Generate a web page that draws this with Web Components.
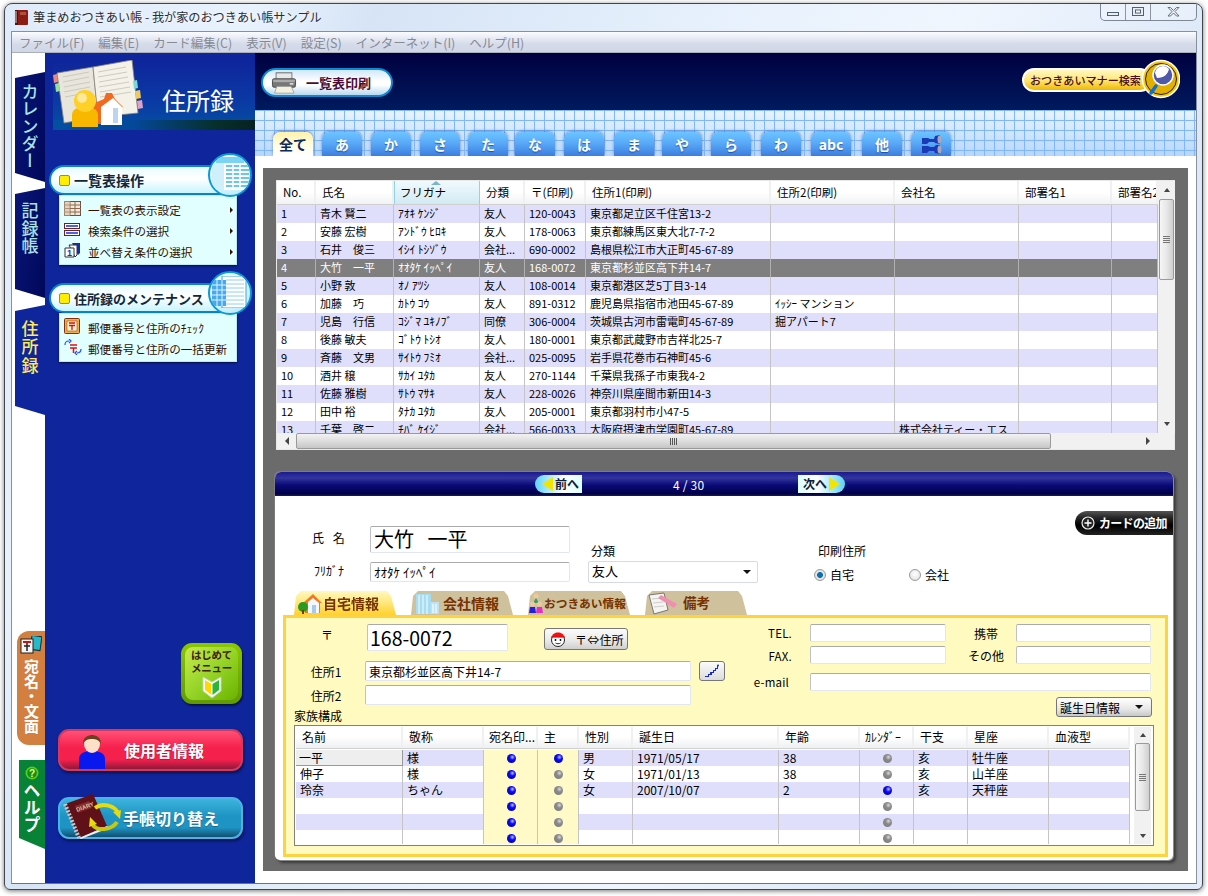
<!DOCTYPE html>
<html lang="ja">
<head>
<meta charset="utf-8">
<title>筆まめおつきあい帳</title>
<style>
html,body{margin:0;padding:0;background:#fff;width:1208px;height:896px;overflow:hidden}
body{font-family:"Noto Sans CJK JP","Noto Sans",sans-serif;font-size:11px;color:#000}
</style>
</head>
<body>
<app-window caption="筆まめおつきあい帳 - 我が家のおつきあい帳サンプル">
  <side-tabs></side-tabs>
  <side-bar></side-bar>
  <main-area></main-area>
</app-window>
<script>
const def=(name,css,html)=>customElements.define(name,class extends HTMLElement{
  connectedCallback(){
    if(this.shadowRoot)return;
    const r=this.attachShadow({mode:'open'});
    r.innerHTML=`<style>:host{box-sizing:border-box}*{box-sizing:border-box}${css}</style>`+(typeof html==='function'?html(this):html);
  }
});
const BASE='"Noto Sans CJK JP","Noto Sans",sans-serif';

/* ---------- small icons ---------- */
const ICON={
 sheet:`<svg width="17" height="15" viewBox="0 0 17 15"><rect x=".5" y=".5" width="16" height="14" fill="#f2e8d8" stroke="#6a5040"/><path d="M6 0v15M11 0v15M0 4h17M0 7.500h17M0 11h17" stroke="#8a6a50"/><rect x="0" y="0" width="6" height="15" fill="#d8b8a0" opacity=".5"/></svg>`,
 search:`<svg width="16" height="13" viewBox="0 0 16 13"><rect x=".5" y=".5" width="15" height="5" fill="#fff" stroke="#702020"/><rect x=".5" y="7.500" width="15" height="5" fill="#fff" stroke="#702020"/><path d="M2 3h12M2 10h12" stroke="#1030e0" stroke-width="1.400"/></svg>`,
 sort:`<svg width="17" height="16" viewBox="0 0 17 16"><path d="M8 1h8v10l-2 2z" fill="#1030b0"/><path d="M5 3h8v10l-2 2z" fill="#fff" stroke="#333"/><path d="M1 6h9v9H1z" fill="#fff" stroke="#333"/><text x="3" y="14" font-size="9" font-weight="700" fill="#1030e0" font-family="Liberation Sans">1</text></svg>`,
 post:`<svg width="16" height="16" viewBox="0 0 16 16"><rect x=".5" y=".5" width="15" height="15" rx="1" fill="#f0b050" stroke="#803010"/><rect x="3" y="3" width="10" height="10" fill="#fff3d0" stroke="#a04010" stroke-width=".6"/><path d="M5 5h6M5 7.500h6M8 7.500V12" stroke="#d01010" stroke-width="1.300"/></svg>`,
 postsync:`<svg width="18" height="16" viewBox="0 0 18 16"><path d="M6 6h7M6 9h7M9.500 9v5" stroke="#e01010" stroke-width="1.500"/><path d="M1 6C1 3 2 2 5 2M5 0l2 2-2 2" fill="none" stroke="#2050f0" stroke-width="1.200"/><path d="M17 10c0 3-1 4-4 4M13 16l-2-2 2-2" fill="none" stroke="#2050f0" stroke-width="1.200"/></svg>`,
 table1:`<svg width="37" height="33" viewBox="0 0 37 33"><path d="M4 0h28v6H4z" fill="#7cd4f4"/><path d="M0 6h12v27H0z" fill="#cfeffb"/><rect x="12" y="6" width="25" height="27" fill="#fff"/><path d="M14 9h23M14 13h23M14 17h23M14 21h23M14 25h23M14 29h23" stroke="#39b4ec" stroke-width="1.600"/><path d="M21 7v26M28 7v26" stroke="#fff" stroke-width="1.500"/></svg>`,
 table2:`<svg width="36" height="32" viewBox="0 0 36 32"><rect x="10" y="0" width="24" height="32" fill="#fff" stroke="#39a4e4"/><path d="M14 4h18M14 8h18M14 12h18M14 16h18M14 20h18M14 24h18M14 28h18" stroke="#90d0f0"/><rect x="0" y="4" width="14" height="26" fill="#48a8ec"/><path d="M0 9h14M0 14h14M0 19h14M0 24h14M5 4v26M10 4v26" stroke="#dff4ff"/></svg>`
};

/* ---------- window ---------- */
def('window-controls',`
:host{display:flex;width:97px;height:17px;border:1px solid #7c8894;border-top:0;border-radius:0 0 5px 5px;background:rgba(255,255,255,.25);align-self:flex-start;flex:none}
div{display:flex;align-items:center;justify-content:center;border-right:1px solid #8a96a4;width:25px}
div:first-child{width:26px}
div:last-child{border:0;flex:1}
`,`<div><svg width="12" height="10"><rect x=".5" y="5.500" width="11" height="3" fill="#e8eef6" stroke="#506070"/></svg></div>
<div><svg width="12" height="10"><rect x=".5" y=".5" width="11" height="8" fill="#e8eef6" stroke="#506070"/><rect x="3.500" y="3" width="5" height="3" fill="#fff" stroke="#506070"/></svg></div>
<div><svg width="13" height="10"><path d="M1 .5h2.500l3 3 3-3H12L8 4.500 12 9H9.500l-3-3-3 3H1l4-4.500z" fill="#eef2f8" stroke="#64707c"/></svg></div>`);

def('app-window',`
:host{display:block;margin:3px 0 0 4px;width:1199px;height:887px;border:1px solid #40464c;border-radius:8px 8px 6px 6px;padding:0 5px 6px 6px;
 background:linear-gradient(112deg,#dfeafa 0%,#e8f2fd 16%,#d6e4f6 24%,#e6f0fc 45%,#f0f6fe 62%,#dce8f8 80%,#e4eefb 100%);
 box-shadow:0 1px 5px rgba(0,0,0,.55);font-family:${BASE};overflow:hidden}
.title{height:27px;display:flex;align-items:center;padding-left:2px;color:#2a2e34;font-size:12.150px}
.title span{margin-left:4px;margin-bottom:2px;text-shadow:0 0 4px #fff;white-space:nowrap}
.title svg{margin-bottom:2px;flex:none}
.title window-controls{margin-left:auto}
.client{height:853px;border:1px solid #8a9098;border-bottom-color:#707478;background:#fff;display:flex;flex-direction:column}
.menu{height:21px;flex:none;display:flex;align-items:center;padding-left:7px;gap:14px;color:#858b95;font-size:12.500px;white-space:nowrap;
 background:linear-gradient(#fbfcfe 0,#e8ebf5 30%,#d6dbea 60%,#d2d7e7 100%);border-bottom:1px solid #a9b0bc}
.body{flex:1;display:flex;min-height:0}
`,h=>`<div class="title"><svg width="16" height="16" viewBox="0 0 16 16"><rect x="2" y="1" width="13" height="15" rx="1" fill="#8c1c14"/><rect x="2" y="1" width="3" height="15" fill="#501010"/><path d="M1 3h3M1 5h3M1 7h3M1 9h3M1 11h3M1 13h3" stroke="#ddd"/><rect x="7" y="3" width="6" height="3" fill="#b05040"/></svg><span>${h.getAttribute('caption')}</span><window-controls></window-controls></div>
<div class="client"><div class="menu"><span>ファイル(F)</span><span>編集(E)</span><span>カード編集(C)</span><span>表示(V)</span><span>設定(S)</span><span>インターネット(I)</span><span>ヘルプ(H)</span></div>
<div class="body"><slot></slot></div></div>`);

/* ---------- left tabs ---------- */
def('side-tab',`
:host{display:flex;flex:none;justify-content:center;width:30px;height:110px;padding-top:11px;font-size:17px;font-weight:500;color:#a9e3e6;
 background:linear-gradient(100deg,#0a1678,#00085a);clip-path:polygon(0 6px,100% 0,100% 100%,0 calc(100% - 9px))}
:host([active]){background:#0f259b;color:#ffe95c}
span{writing-mode:vertical-rl;letter-spacing:var(--ls,.3px);line-height:1}
`,`<span><slot></slot></span>`);
def('side-tabs',`
:host{display:flex;flex-direction:column;align-items:flex-end;width:33px;flex:none;padding-top:19px;background:#fff}
.t2{margin-top:6px;padding-top:14px;--ls:.7px}.t3{margin-top:7px;padding-top:15px;--ls:1.300px}
.o{margin-top:216px;width:28px;height:114px;background:#d27f3f;border-radius:12px 0 0 12px;color:#fff;font-weight:700;font-size:15px;display:flex;flex-direction:column;align-items:center;padding-top:5px}
.o span,.g span{writing-mode:vertical-rl;line-height:1}
.o span{margin-top:5px;letter-spacing:0;margin-left:1px}
.g{margin-top:15px;width:26px;height:89px;background:#078237;clip-path:polygon(0 0,100% 0,100% 100%,0 78px);color:#fff;font-weight:700;font-size:17px;display:flex;flex-direction:column;align-items:center;padding-top:6px}
.g span{margin-top:2px}
`,`<side-tab>カレンダー</side-tab><side-tab class="t2">記録帳</side-tab><side-tab class="t3" active>住所録</side-tab>
<div class="o"><svg width="22" height="18" viewBox="0 0 22 18"><rect x="11" y="0" width="10" height="14" fill="#28b8c8" stroke="#083040" transform="rotate(8 16 7)"/><rect x="1" y="3" width="12" height="14" fill="#f4f4f4" stroke="#222"/><path d="M3 6h8" stroke="#d01010" stroke-width="2"/><path d="M7 7v8M4 10h6" stroke="#222" stroke-width="1.500"/></svg><span>宛名・文面</span></div>
<div class="g"><svg width="14" height="14" viewBox="0 0 14 14"><circle cx="7" cy="7" r="6.500" fill="#54d018"/><circle cx="7" cy="7" r="4.800" fill="#148c20"/><text x="7" y="10.500" text-anchor="middle" font-size="10" font-weight="700" fill="#e8ff70" font-family="Liberation Sans">?</text></svg><span>ヘルプ</span></div>`);

/* ---------- sidebar ---------- */
def('menu-item',`
:host{display:flex;align-items:center;height:21px;font-size:11.600px;color:#301000;padding-left:4px}
.i{width:24px;display:flex;flex:none}
.a{margin-left:auto;margin-right:3px;width:0;height:0;border-left:3px solid #301000;border-top:3px solid transparent;border-bottom:3px solid transparent}
:host([plain]) .a{display:none}
span{white-space:nowrap}
`,h=>`<div class="i"><slot name="i"></slot></div><span><slot></slot></span><div class="a"></div>`);
def('menu-section',`
:host{display:block;position:relative;margin-left:4px}
.pill{height:30px;width:172px;border:2px solid #0a86c8;border-right:0;border-radius:15px 0 0 15px;background:linear-gradient(#e6fbff 0,#fff 45%,#c8f4fc 100%);
 display:flex;align-items:center;padding-left:8px;font-weight:700;color:#10283c;white-space:nowrap}
.sq{width:11px;height:11px;background:#ffee00;border:1px solid #888;border-radius:2px;margin-right:4px;flex:none}
.c{position:absolute;left:159px;top:var(--ct,-12px);width:44px;height:44px;border-radius:50%;border:2px solid #0a9ad8;background:radial-gradient(circle at 40% 30%,#fff 0,#c8f0fc 70%,#8adcf8 100%);display:flex;align-items:center;justify-content:center;overflow:hidden}
.panel{margin-left:10px;width:178px;background:#e2ffff;padding:3px 0 2px;box-shadow:0 1px 2px rgba(0,0,0,.6);border:1px solid #c0e8f0}
`,h=>`<div class="pill" style="font-size:${h.getAttribute('fs')||14}px"><div class="sq"></div>${h.getAttribute('heading')}</div>
<div class="c"><slot name="badge"></slot></div><div class="panel"><slot></slot></div>`);
def('big-button',`
:host{display:flex;align-items:center;height:42px;width:185px;margin-left:13px;border-radius:11px;border:2px solid var(--b);background:linear-gradient(var(--t) 0,var(--m) 45%,var(--m) 75%,var(--d) 100%);color:#fff;font-size:16px;font-weight:700;box-shadow:1px 2px 3px rgba(0,0,0,.55);position:relative;text-shadow:0 1px 1px rgba(0,0,0,.3);white-space:nowrap}
.i{width:var(--w,64px);flex:none;display:flex;justify-content:center;align-self:flex-end}
`,`<div class="i"><slot name="i"></slot></div><slot></slot>`);
def('starter-button',`
:host{display:flex;flex-direction:column;align-items:center;width:61px;height:61px;margin-left:136px;border-radius:11px;background:linear-gradient(#8cc800,#609a00);padding:4px;box-shadow:1px 2px 2px rgba(0,0,0,.5)}
.f{flex:1;width:100%;border-radius:8px;background:linear-gradient(135deg,#c6ea50 0,#96d428 50%,#6ab400 100%);display:flex;flex-direction:column;align-items:center;padding-top:2px;color:#43200c;font-family:"Liberation Sans","Noto Sans CJK JP",sans-serif;font-weight:700;font-size:10.500px;line-height:13px;letter-spacing:-.2px;white-space:nowrap}
svg{margin-top:0}
`,`<div class="f"><span>はじめて</span><span>メニュー</span><svg width="20" height="24" viewBox="0 0 20 24"><path d="M1 2l9 5 9-5v14l-9 7-9-7z" fill="#fff" stroke="#bcd8a0"/><path d="M3 5l6.500 4v11L3 15z" fill="#ffd800"/><path d="M17 5l-6.500 4v11L17 15z" fill="#28b838"/></svg></div>`);
def('side-bar',`
:host{display:block;width:210px;flex:none;background:#0f259b;padding-top:7px;height:830px;overflow:hidden}
.h{margin-left:8px;height:70px;position:relative;background:linear-gradient(#0f259b 0,#0a3aa4 60%,#0450a0 100%);display:flex;overflow:hidden}
.h::after{content:"";position:absolute;left:0;right:0;bottom:0;height:10px;background:linear-gradient(90deg,#0450a0 0,#04489a 40%,#06302c 80%,#062220 100%)}
.h svg{position:absolute;left:0;top:0;z-index:1}
.h b{position:absolute;left:109px;top:25px;color:#fff;font-weight:400;font-size:24px;line-height:30px;z-index:1}
.s1{margin-top:35px}.s2{margin-top:18px}
.st{margin-top:281px}.b1{margin-top:25px;--b:#d03a60;--t:#ff5076;--m:#f6204c;--d:#901838}
.b2{margin-top:26px;--b:#48b4e8;--t:#3cb4dc;--m:#1e94c4;--d:#105070}
`,`<div class="h"><svg width="92" height="70" viewBox="0 0 92 70">
<path d="M4 13L40 7l5 50-34 6z" fill="#e8e5dc" stroke="#8a8478" stroke-width=".8"/><path d="M40 7L79 0l6 53-40 4z" fill="#f4f1e8" stroke="#8a8478" stroke-width=".8"/>
<path d="M10 17l26-5M10 22l26-5M11 27l26-5M11 32l26-5M12 37l26-5M45 12l28-5M45 17l29-5M46 22l29-5M46 27l30-5M47 32l30-5M47 37l31-5" stroke="#c4c0b6" stroke-width=".8"/>
<path d="M0 15l4-1 1 8-4 1z" fill="#e88880"/><path d="M2 24l4-1 1 8-4 1z" fill="#98e098"/><path d="M80 21l4-1 1 8-4 1z" fill="#78d8d8"/><path d="M82 31l5-1 1 8-5 1z" fill="#f0c860"/><path d="M84 41l5-1 1 8-5 1z" fill="#e0a0c8"/>
<path d="M39 44l12-5 2-6h6l3 6 8 8-3 1v16H44z" fill="#f06a20"/><path d="M48 47l12-9 9 9v18H48z" fill="#fff"/><path d="M60 48h5v15h-5z" fill="#bcd4f0"/>
<path d="M19 67V55c0-6 6-8 13-8s13 2 13 8v12z" fill="#f8b800"/><circle cx="32" cy="41" r="11" fill="#ffd028"/><circle cx="29" cy="38" r="5" fill="#ffe89a"/></svg><b>住所録</b></div>
<menu-section class="s1" heading="一覧表操作"><span slot="badge">${ICON.table1}</span>
 <menu-item><span slot="i">${ICON.sheet}</span>一覧表の表示設定</menu-item><menu-item><span slot="i">${ICON.search}</span>検索条件の選択</menu-item><menu-item><span slot="i">${ICON.sort}</span>並べ替え条件の選択</menu-item></menu-section>
<menu-section class="s2" heading="住所録のメンテナンス" fs="13"><span slot="badge">${ICON.table2}</span>
 <menu-item plain><span slot="i">${ICON.post}</span>郵便番号と住所のﾁｪｯｸ</menu-item><menu-item plain><span slot="i">${ICON.postsync}</span>郵便番号と住所の一括更新</menu-item></menu-section>
<starter-button class="st"></starter-button>
<big-button class="b1"><svg slot="i" width="26" height="34" viewBox="0 0 26 34"><path d="M0 34V24c0-6 6-8 13-8s13 2 13 8v10z" fill="#0a18f0"/><ellipse cx="13" cy="9" rx="8" ry="9" fill="#fce0c8"/><path d="M4 9C4 2 9 0 13 0s9 2 9 9c-2-4-5-5-9-5S6 5 4 9z" fill="#6a4020"/></svg>使用者情報</big-button>
<big-button class="b2" style="--w:63px"><svg slot="i" width="62" height="46" viewBox="0 0 62 46" style="margin-bottom:-3px;margin-left:-4px;overflow:visible"><path d="M6 10L34 0l14 32-28 12z" fill="#601018"/><path d="M6 10l14 34" stroke="#c8c8c8" stroke-width="4" stroke-dasharray="2 1.500"/><path d="M20 44l28-12 2 2-28 11z" fill="#eee"/><path d="M16 12l14-5 3 7-14 5z" fill="#8a2a30"/><text x="18" y="18" font-size="6" fill="#e0c090" font-family="Liberation Sans" transform="rotate(-20 18 18)">DIARY</text>
<path d="M36 14c8-6 20-2 23 5" fill="none" stroke="#e2dc10" stroke-width="4"/><path d="M61 25l-7-7 8-2z" fill="#e2dc10"/><path d="M58 28c-5 8-20 10-25 2" fill="none" stroke="#c8c810" stroke-width="4"/><path d="M31 23l7 7-8 3z" fill="#e2dc10"/></svg>手帳切り替え</big-button>`);

/* ---------- main header ---------- */
def('kana-tab',`
:host{display:flex;align-items:center;justify-content:center;width:40px;height:24px;border-radius:7px 7px 0 0;background:linear-gradient(#6cc4ff 0,#5aaaf8 45%,#3c7ee0 100%);color:#fff;font-weight:700;font-size:14px;box-shadow:0 -1px 3px rgba(30,60,120,.55);text-shadow:0 1px 1px rgba(0,40,120,.6);line-height:1;flex:none}
:host([active]){background:linear-gradient(#fff2a8 0,#fffce0 50%,#fff 100%);color:#0a2a60;text-shadow:none}
`,`<slot></slot>`);
const KANA=[['全て',0],['あ',9],['か',9],['さ',9],['た',8],['な',7],['は',9],['ま',10],['や',8],['ら',9],['わ',10],['abc',10],['他',11]];
def('top-header',`
:host{display:block;flex:none}
.nav{height:57px;background:linear-gradient(#000040 0,#001a5e 100%);display:flex;justify-content:space-between;position:relative}
.print{margin:15px 0 0 6px;width:132px;height:29px;border-radius:15px;border:2.500px solid #0a8ad0;background:linear-gradient(#d0e8f8 0,#fff 45%,#fff 60%,#b8d8f0 100%);display:flex;align-items:center;color:#4a0c34;font-weight:700;font-size:13px;padding-left:8px;white-space:nowrap}
.print span{margin-left:9px}
.manner{position:relative;margin:15px 16px 0 0;width:158px;height:24px}
.manner .p{width:130px;height:24px;border:2px solid #fff;border-radius:12px;background:linear-gradient(#fff8c0 0,#ffe878 50%,#f0b800 100%);display:flex;align-items:center;padding-left:6px;color:#4a0c1c;font-size:11.100px;white-space:nowrap;font-weight:500}
.manner .g{position:absolute;right:0;top:-9px;width:38px;height:40px}
.grid{height:46px;background-color:#cfe4ff;background-image:linear-gradient(#7fb6ff 1px,transparent 1px),linear-gradient(90deg,#7fb6ff 1px,transparent 1px),linear-gradient(#e9f4ff,#b6d6ff);background-size:10px 10px,10px 10px,100% 100%;background-position:0 0,9px 0,0 0;display:flex;align-items:flex-end;padding-left:18px;overflow:hidden}
`,`<div class="nav"><div class="print"><svg width="26" height="22" viewBox="0 0 36 26" preserveAspectRatio="none"><rect x="7" y="1" width="22" height="8" fill="#e8e8e8" stroke="#555"/><rect x="2" y="8" width="32" height="10" rx="2" fill="#777" stroke="#333"/><rect x="3" y="9" width="30" height="3" fill="#aaa"/><path d="M8 17h20l4 8H5z" fill="#f4f0e0" stroke="#999"/><rect x="26" y="13" width="5" height="2" fill="#ddd"/></svg><span>一覧表印刷</span></div>
<div class="manner"><div class="p">おつきあいマナー検索</div><svg class="g" viewBox="0 0 38 40"><circle cx="19" cy="20" r="18.500" fill="#f8c800" stroke="#fff" stroke-width="1.500"/><circle cx="19" cy="20" r="15.500" fill="#e4b000" stroke="#222" stroke-width="1"/><path d="M14 27l-5 7" stroke="#1070d0" stroke-width="3.500" stroke-linecap="round"/><circle cx="21" cy="16" r="10" fill="#5058a8" stroke="#fff" stroke-width="1.500"/><path d="M13 14a8 8 0 0 1 14-4c-1 5-5 9-12 9z" fill="#fff"/></svg></div></div>
<div class="grid">${KANA.map(([t,m],i)=>`<kana-tab ${i==0?'active':''} style="margin-left:${m}px">${t}</kana-tab>`).join('')}<kana-tab style="margin-left:9px"><svg width="21" height="19" viewBox="0 0 21 19"><path d="M1 3h6l2 1h4l1-3 5-1v9l-5-1-1-1H8L6 9H1z" fill="#1a3ab8"/><path d="M1 11h6l2 1h4l2-2 4 0v9l-5-1-1-2H8l-2 2H1z" fill="#1a3ab8"/><ellipse cx="18.500" cy="4.500" rx="2" ry="4" fill="#a8a8b8"/><ellipse cx="18.500" cy="14.500" rx="2" ry="4" fill="#a8a8b8"/></svg></kana-tab></div>`);

/* ---------- scrollbars ---------- */
const ARR={up:'border-left:3.500px solid transparent;border-right:3.500px solid transparent;border-bottom:4px solid #444',
 down:'border-left:3.500px solid transparent;border-right:3.500px solid transparent;border-top:4px solid #444',
 left:'border-top:4px solid transparent;border-bottom:4px solid transparent;border-right:4px solid #444',
 right:'border-top:4px solid transparent;border-bottom:4px solid transparent;border-left:4px solid #444'};
def('v-scroll',`
:host{display:flex;flex-direction:column;width:17px;flex:none;background:#f1f1f1}
.a{display:flex;align-items:center;justify-content:center;flex:none;height:var(--ah,18px)}
.a i{display:block;width:0;height:0}
.tr{flex:1;min-height:0}
.th{height:var(--th,81px);margin:0 1px;border:1px solid #9a9a9a;border-radius:2px;background:linear-gradient(90deg,#f6f6f6,#e8e8e8 50%,#cfcfcf);display:flex;align-items:center;justify-content:center}
.th i{width:7px;height:7px;background:repeating-linear-gradient(#777 0 1px,transparent 1px 2px)}
`,`<div class="a"><i style="${ARR.up}"></i></div><div class="tr"><div class="th"><i></i></div></div><div class="a"><i style="${ARR.down}"></i></div>`);
def('h-scroll',`
:host{display:flex;height:16px;flex:none;background:#f1f1f1;align-items:stretch}
.a{display:flex;align-items:center;justify-content:center;flex:none;width:19px}
.a i{display:block;width:0;height:0}
.th{flex:none;width:755px;margin:0;border:1px solid #9a9a9a;border-radius:2px;background:linear-gradient(#f2f2f2,#dedede 50%,#c6c6c6);display:flex;align-items:center;justify-content:center}
.th i{width:7px;height:7px;background:repeating-linear-gradient(90deg,#555 0 1px,transparent 1px 2px)}
.tr{flex:1}
`,`<div class="a"><i style="${ARR.left}"></i></div><div class="th"><i></i></div><div class="tr"></div><div class="a" style="width:18px;margin-right:1px"><i style="${ARR.right}"></i></div>`);

/* ---------- address grid ---------- */
const ADDR_COLS='39px 78px 86px 45px 61px 185px 124px 124px 93px 46px';
const ADDR_HEAD=['No.','氏名','フリガナ','分類','〒(印刷)','住所1(印刷)','住所2(印刷)','会社名','部署名1','部署名2'];
const ADDR=[
['1','青木 賢二','ｱｵｷ ｹﾝｼﾞ','友人','120-0043','東京都足立区千住宮13-2','',''],
['2','安藤 宏樹','ｱﾝﾄﾞｳ ﾋﾛｷ','友人','178-0063','東京都練馬区東大北7-7-2','',''],
['3','石井　俊三','ｲｼｲ ﾄｼｿﾞｳ','会社...','690-0002','島根県松江市大正町45-67-89','',''],
['4','大竹　一平','ｵｵﾀｹ ｲｯﾍﾟｲ','友人','168-0072','東京都杉並区高下井14-7','',''],
['5','小野 敦','ｵﾉ ｱﾂｼ','友人','108-0014','東京都港区芝5丁目3-14','',''],
['6','加藤　巧','ｶﾄｳ ｺｳ','友人','891-0312','鹿児島県指宿市池田45-67-89','ｲｯｼｰ マンション',''],
['7','児島　行信','ｺｼﾞﾏ ﾕｷﾉﾌﾞ','同僚','306-0004','茨城県古河市雷電町45-67-89','掘アパート7',''],
['8','後藤 敏夫','ｺﾞﾄｳ ﾄｼｵ','友人','180-0001','東京都武蔵野市吉祥北25-7','',''],
['9','斉藤　文男','ｻｲﾄｳ ﾌﾐｵ','会社...','025-0095','岩手県花巻市石神町45-6','',''],
['10','酒井 穣','ｻｶｲ ﾕﾀｶ','友人','270-1144','千葉県我孫子市東我4-2','',''],
['11','佐藤 雅樹','ｻﾄｳ ﾏｻｷ','友人','228-0026','神奈川県座間市新田14-3','',''],
['12','田中 裕','ﾀﾅｶ ﾕﾀｶ','友人','205-0001','東京都羽村市小47-5','',''],
['13','千葉　啓二','ﾁﾊﾞ ｹｲｼﾞ','会社...','566-0033','大阪府摂津市学園町45-67-89','','株式会社ティー・エス']
];
def('address-grid',`
:host{display:block;margin-left:0;width:899px;height:270px;background:#fff;border:1px solid #e8e8e8;font-size:11px}
.main{display:flex;height:252px}
.left{width:881px;flex:none;overflow:hidden}
.hd,.r{display:grid;grid-template-columns:${ADDR_COLS}}
.hd{height:24px;border-bottom:1px solid #d0d0d0;background:linear-gradient(#fff 0,#fff 50%,#f1f2f4 100%)}
.hd div{padding:0 6px;line-height:22px;border-right:2px solid #f0f0f0;white-space:nowrap;overflow:hidden;position:relative;font-size:11.500px}
.hd div.sort{background:linear-gradient(#f0fafe,#d2eaf4);border:1px solid #8ed2f2;border-top:0;border-bottom:0;padding-left:5px}
.hd div.sort::before{content:"";position:absolute;left:36px;top:0;border-left:5px solid transparent;border-right:5px solid transparent;border-bottom:4px solid #7ab4cc}
.r{height:18px;line-height:16px}
.r:nth-child(odd){background:#dfdffc}
.r.sel{background:#7f7f7f;color:#fff}
.r div{padding:0 4px;border-right:1px solid #c4c4c4;white-space:nowrap;overflow:hidden}
.r div.kana{font-size:11.500px}
.r.sel div{border-right-color:#b0b0b0}
.bot{display:flex}.bot h-scroll{width:881px}.corner{flex:1;background:#f1f1f1}
.rows{height:228px;overflow:hidden}
`,`<div class="main"><div class="left"><div class="hd">${ADDR_HEAD.map((t,i)=>`<div class="${i==2?'sort':''}">${t}</div>`).join('')}</div>
<div class="rows">${ADDR.map((r,i)=>`<div class="r${i==3?' sel':''}">${[...r,'',''].slice(0,10).map((c,j)=>`<div class="${j==2?'kana':''}">${c}</div>`).join('')}</div>`).join('')}</div></div>
<v-scroll></v-scroll></div><div class="bot"><h-scroll></h-scroll><div class="corner"></div></div>`);

/* ---------- family grid ---------- */
const FC='107px 81px 54px 41px 54px 146px 81px 54px 54px 81px 81px';
const FAM_HEAD=['名前','敬称','宛名印...','主','性別','誕生日','年齢','ｶﾚﾝﾀﾞｰ','干支','星座','血液型'];
const FAM=[
['一平','様',1,1,'男','1971/05/17','38',0,'亥','牡牛座',''],
['伸子','様',1,0,'女','1971/01/13','38',0,'亥','山羊座',''],
['玲奈','ちゃん',1,0,'女','2007/10/07','2',1,'亥','天秤座',''],
['','',1,0,'','','',0,'','',''],['','',1,0,'','','',0,'','',''],['','',1,0,'','','',0,'','','']];
const ball=on=>`<i class="b ${on?'on':''}"></i>`;
def('family-grid',`
:host{display:flex;width:860px;height:121px;margin-left:8px;background:#fff;border:1px solid #808080;padding:1px;font-size:12px}
.left{width:838px;flex:none;overflow:hidden}
.hd,.r{display:grid;grid-template-columns:${FC}}
.hd{height:22px;border-bottom:1px solid #d0d0d0;background:linear-gradient(#fff 0,#fff 45%,#eff0f2 100%);width:833px}
.hd div{padding:0 6px;line-height:20px;border-right:2px solid #f0f0f0;white-space:nowrap;overflow:hidden;font-size:12px}
.hd div.sm{padding:0 5px}
.rows{height:95px;overflow:hidden;margin-top:1px}
.r{height:16px;line-height:15px;width:833px}
.r:nth-child(odd){background:#dfdffc}
.r div{padding:0 3px 0 4px;border-right:1px solid #c4c4c4;white-space:nowrap;overflow:hidden;display:block}
.r div.c{display:flex;align-items:center;justify-content:center}
.r div.y{background:#fffac8}
.r div.cur{background:#eee;border-right:1px solid #999;border-bottom:1px solid #999;padding-left:3px}
.b{display:block;width:9px;height:9px;border-radius:50%;background:radial-gradient(circle at 60% 35%,#d8d8d8 0,#8a8a8a 35%,#7a7a7a 100%)}
.b.on{background:radial-gradient(circle at 60% 35%,#bcbcff 0,#0808f0 35%,#0000b0 100%)}
v-scroll{--th:68px;--ah:16px;height:117px;margin-left:0}
`,`<div class="left"><div class="hd">${FAM_HEAD.map((t,i)=>`<div class="${i==2||i==7?'sm':''}">${t}</div>`).join('')}</div>
<div class="rows">${FAM.map((r,i)=>`<div class="r">${r.map((c,j)=>{
 if(j==2||j==3)return `<div class="c y">${ball(c)}</div>`;
 if(j==7)return `<div class="c">${ball(c)}</div>`;
 return `<div class="${i==0&&j==0?'cur':''}">${c}</div>`}).join('')}</div>`).join('')}</div></div><v-scroll></v-scroll>`);

/* ---------- form bits ---------- */
def('text-box',`
:host{display:flex;align-items:center;flex:none;background:#fff;border:1px solid #e2e6f0;border-top-color:#aaa;border-left-color:#c0c0c8;border-radius:2px;padding:0 3px;white-space:nowrap;overflow:hidden}
`,`<slot></slot>`);
def('drop-box',`
:host{display:flex;align-items:center;flex:none;justify-content:space-between;background:#fff;border:1px solid #d6dae6;border-radius:2px;padding:0 6px 0 3px;font-size:13px}
span{margin-top:var(--up,0)}
i{width:0;height:0;border-left:4px solid transparent;border-right:4px solid transparent;border-top:4px solid #111}
:host([btn]){background:linear-gradient(#fff,#e8e8e8 60%,#c8c8c8);border:1px solid #777;font-size:12px;border-radius:3px;padding:0 8px 0 3px}
`,`<span><slot></slot></span><i></i>`);
def('radio-opt',`
:host{display:inline-flex;align-items:center;font-size:12px;gap:4px}
i{width:12px;height:12px;border-radius:50%;border:1px solid #9a9a9a;background:radial-gradient(circle at 50% 40%,#fff,#ddd)}
:host([on]) i{background:radial-gradient(circle,#0b6fb0 0,#0b6fb0 38%,#e8e8e8 45%,#ddd 100%)}
`,`<i></i><slot></slot>`);
def('info-tab',`
:host{display:flex;align-items:center;width:102px;height:24px;background:#cfc19c;clip-path:polygon(0 100%,2px 5px,7px 0,93px 0,97px 5px,102px 100%);color:#763200;font-size:14px;font-weight:700;white-space:nowrap;padding-left:3px;line-height:1}
:host([active]){background:linear-gradient(#fff8c0 0,#ffe77a 50%,#ffd030 100%);filter:drop-shadow(0 0 .5px #e8a800)}
.i{flex:none;display:flex}
`,`<div class="i"><slot name="i"></slot></div><slot></slot>`);

/* ---------- card ---------- */
def('address-card',`
:host{display:block;width:898px;height:388px;margin-left:-1px;background:#fff;border-radius:6px 6px 5px 5px;box-shadow:1px 1px 0 #8a8a8a,3px 3px 3px #3a3a3a,-1px -1px 0 #7c7c7c;font-size:12px;overflow:hidden}
.bar{height:24px;background:linear-gradient(#1a1a90 0,#34349e 25%,#0a0a78 55%,#000048 90%,#1a1a50 100%);display:flex;align-items:center;color:#fff}
.nav{height:18px;width:47px;font-weight:700;font-size:12px;color:#102030;background:linear-gradient(90deg,#5cd4f8,#fff 60%,#dff);display:flex;align-items:center;justify-content:flex-end;padding-right:3px;flex:none;gap:2px;line-height:1}
.prev{margin-left:260px;border-radius:9px 0 0 9px}
.next{margin-left:93px;border-radius:0 9px 9px 0;background:linear-gradient(90deg,#dff,#fff 40%,#5cd4f8);justify-content:flex-start;padding:0 0 0 5px}
.pg{margin-left:91px;width:32px;font-size:12px;white-space:nowrap;letter-spacing:.2px}
.tri-l{width:0;height:0;border-right:11px solid #f2e600;border-top:7px solid transparent;border-bottom:7px solid transparent}
.tri-r{width:0;height:0;border-left:11px solid #f2e600;border-top:7px solid transparent;border-bottom:7px solid transparent}
.top{height:95px;display:flex;position:relative}
.names{margin:30px 0 0 37px;width:258px}
.nr{display:flex;align-items:center}
.nr label{width:58px;flex:none;white-space:pre}
.nr+.nr{margin-top:9px}
.cat{margin:45px 0 0 18px;width:170px}
.cat label,.pr label{display:block;height:19px;line-height:19px;padding-left:3px}
.cat drop-box{margin-top:1px;--up:-4px}
.pr{margin:45px 0 0 56px}
.pr label{padding-left:4px}
.pr .opts{display:flex;gap:55px;margin-top:6px}
.add{position:absolute;right:0;top:15px;width:98px;height:24px;border-radius:12px 0 0 12px;background:linear-gradient(#555 0,#2a2a2a 25%,#000 60%,#222 100%);color:#fff;font-weight:700;font-size:12px;display:flex;align-items:center;padding-left:6px;gap:4px;line-height:1;white-space:nowrap;letter-spacing:-.7px}
.tabs{display:flex;gap:15px;padding-left:19px;height:24px}
.panel{margin-left:8px;width:885px;height:242px;background:#fffbc0;border:3px solid #ffd23f}
.up{display:flex;height:107px;margin-left:1px}
.lc{width:458px;flex:none}
.l1{display:flex;margin-top:6px}
.l1 .lb{width:80px;text-align:center;line-height:22px;flex:none}
.lr{display:flex;align-items:center}
.lr .lb{width:78px;text-align:center;flex:none}
.btn{display:flex;align-items:center;margin:4px 0 0 36px;width:84px;height:22px;border:1px solid #777;border-radius:3px;background:linear-gradient(#fbfbfb,#e8e8e8 60%,#cfcfcf);gap:8px;padding-left:4px;white-space:nowrap;letter-spacing:.2px}
.map{margin-left:8px;width:26px;height:20px;border:1px solid #777;border-radius:3px;background:linear-gradient(#fbfbfb,#dcdcdc);display:flex;align-items:center;justify-content:center}
.fam{margin:2px 0 0 7px;height:17px;line-height:17px}
.rc{flex:1}
.rr{display:flex;align-items:center;height:18px}
.rr .lb1{width:65px;text-align:right;padding-right:18px;flex:none;white-space:nowrap;font-size:11.500px;letter-spacing:.2px}
.rr .lb2{width:70px;text-align:center;padding-left:10px;flex:none;white-space:nowrap}
.sel{margin:6px 0 0 311px;width:96px;height:20px}
`,`<div class="bar"><div class="nav prev"><i class="tri-l"></i>前へ</div><div class="pg">4 / 30</div><div class="nav next">次へ<i class="tri-r"></i></div></div>
<div class="top">
 <div class="names">
  <div class="nr"><label style="word-spacing:6px;padding-bottom:4px">氏 名</label><text-box style="width:200px;height:27px;font-size:20px;padding-bottom:3px;word-spacing:9px">大竹 一平</text-box></div>
  <div class="nr"><label style="padding:0 0 3px 2px">ﾌﾘｶﾞﾅ</label><text-box style="width:200px;height:20px;font-size:13px;padding-bottom:2px">ｵｵﾀｹ ｲｯﾍﾟｲ</text-box></div>
 </div>
 <div class="cat"><label>分類</label><drop-box style="height:22px">友人</drop-box></div>
 <div class="pr"><label>印刷住所</label><div class="opts"><radio-opt on>自宅</radio-opt><radio-opt>会社</radio-opt></div></div>
 <div class="add"><svg width="14" height="14" viewBox="0 0 14 14"><circle cx="7" cy="7" r="6" fill="#222" stroke="#eee" stroke-width="1.200"/><path d="M7 3.500v7M3.500 7h7" stroke="#fff" stroke-width="1.400"/></svg>カードの追加</div>
</div>
<div class="tabs">
 <info-tab active><svg slot="i" width="26" height="22" viewBox="0 0 26 22"><path d="M6 11L16 2l9 9-2 0v10H8V11z" fill="#f07a20"/><path d="M11 10l5-4 6 5v10H11z" fill="#f4f8fc"/><rect x="15" y="13" width="4" height="8" fill="#a8c8ec"/><circle cx="6" cy="15" r="5" fill="#2a9a20"/><rect x="5" y="18" width="2" height="4" fill="#704010"/></svg>自宅情報</info-tab>
 <info-tab><svg slot="i" width="27" height="22" viewBox="0 0 27 22" style="margin-right:2px"><rect x="2" y="2" width="15" height="20" fill="#a8dcf0"/><path d="M5 3v19M9 3v19M13 3v19" stroke="#d8f2fc" stroke-width="1.500"/><rect x="17" y="10" width="8" height="12" fill="#c0e2f0"/><path d="M19 12v9M22 12v9" stroke="#fff"/></svg>会社情報</info-tab>
 <info-tab style="font-size:11.700px;padding-left:1px"><svg slot="i" width="14" height="22" viewBox="0 0 14 22" style="margin-right:1px"><circle cx="7" cy="4" r="2.500" fill="#f0c8a0"/><path d="M4 11l3-5 3 5z" fill="#30a060"/><circle cx="3.500" cy="12" r="2.500" fill="#f0c8a0"/><circle cx="10.500" cy="12" r="2.500" fill="#f0c8a0"/><path d="M0 21l1-6h5l1 6z" fill="#2020e0"/><path d="M7 21l1-6h5l1 6z" fill="#e030c0"/></svg>おつきあい情報</info-tab>
 <info-tab style="padding-left:2px;font-size:13.500px"><svg slot="i" width="36" height="24" viewBox="0 0 36 24"><path d="M2 4l15-2 4 17-14 4z" fill="#f6f4f0" stroke="#777"/><path d="M5 8l10-1M6 12l10-1M7 16l10-1" stroke="#ccc"/><path d="M11 7l3-3 16 9-3 4z" fill="#f090b0"/></svg>備考</info-tab>
</div>
<div class="panel">
 <div class="up">
  <div class="lc">
   <div class="l1"><div class="lb">〒</div><text-box style="width:141px;height:27px;font-size:19.500px;padding-left:2px">168-0072</text-box>
    <div class="btn"><svg width="18" height="18" viewBox="0 0 18 18"><circle cx="9" cy="10" r="6.500" fill="#fff" stroke="#222"/><path d="M3 7c0-6 12-6 12 0z" fill="#f01010"/><path d="M2 7h14" stroke="#e01010" stroke-width="1.300"/><circle cx="6.500" cy="10" r=".9"/><circle cx="11.500" cy="10" r=".9"/><path d="M6.500 13c1.500 1 3.500 1 5 0" fill="none" stroke="#222"/></svg>〒⇔住所</div></div>
   <div class="lr" style="margin-top:10px"><div class="lb">住所1</div><text-box style="width:326px;height:20px;font-size:12px">東京都杉並区高下井14-7</text-box>
    <div class="map"><svg width="16" height="14" viewBox="0 0 16 14"><path d="M1 12h3v-2h2V8h3V6h2V4h2V2h1v3h-2v2h-2v2H8v2H5v2H1z" fill="#1a2ac0"/><circle cx="14" cy="1.500" r="1" fill="#1a2ac0"/></svg></div></div>
   <div class="lr" style="margin-top:4px"><div class="lb">住所2</div><text-box style="width:326px;height:20px"></text-box></div>
   <div class="fam">家族構成</div>
  </div>
  <div class="rc">
   <div class="rr" style="margin-top:6px"><div class="lb1">TEL.</div><text-box style="width:136px;height:18px"></text-box><div class="lb2">携帯</div><text-box style="width:135px;height:18px"></text-box></div>
   <div class="rr" style="margin-top:4px"><div class="lb1" style="padding-top:2px">FAX.</div><text-box style="width:136px;height:18px"></text-box><div class="lb2">その他</div><text-box style="width:135px;height:18px"></text-box></div>
   <div class="rr" style="margin-top:9px"><div class="lb1" style="padding-right:21px">e-mail</div><text-box style="width:341px;height:18px"></text-box></div>
   <drop-box class="sel" btn>誕生日情報</drop-box>
  </div>
 </div>
 <family-grid></family-grid>
</div>`);

def('main-area',`
:host{display:flex;flex-direction:column;flex:1;min-width:0;background:#fff;height:830px}
.gray{margin:12px 8px 12px;flex:1;background:#6b6b6b;padding:12px 13px 0;display:flex;flex-direction:column}
address-card{margin-top:22px}
`,`<top-header></top-header><div class="gray"><address-grid></address-grid><address-card></address-card></div>`);
</script>
</body>
</html>
